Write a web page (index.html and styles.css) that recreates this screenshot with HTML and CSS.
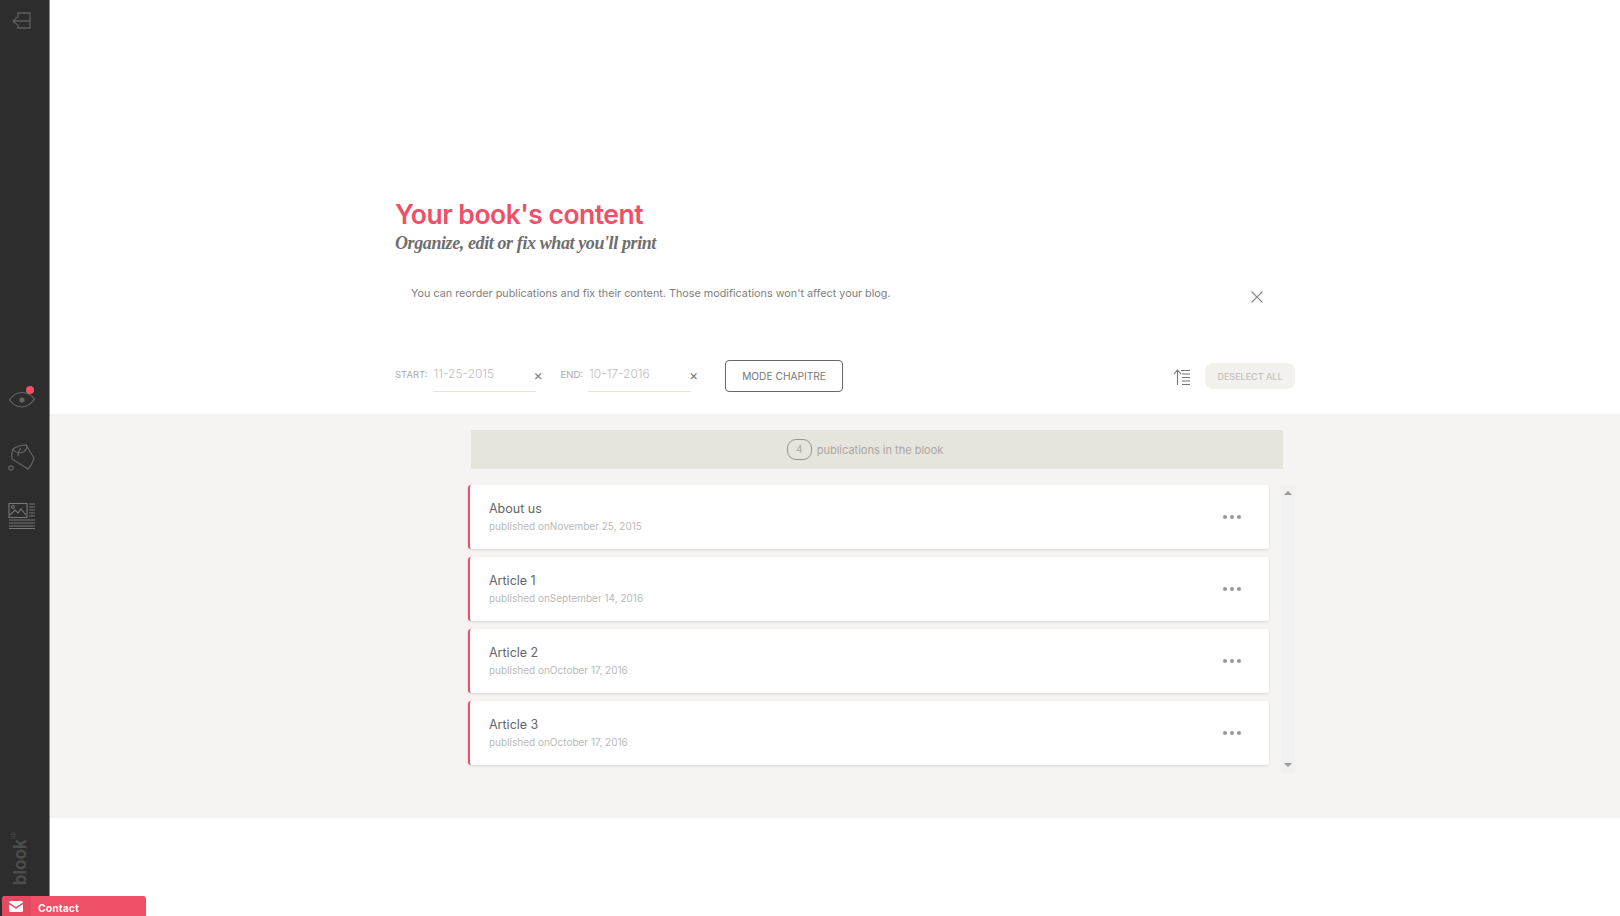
FILE: index.html
```html
<!DOCTYPE html>
<html lang="en">
<head>
    <meta charset="UTF-8">
    <title>Your book's content</title>
    <link rel="stylesheet" href="styles.css">
</head>
<body>
    <div class="app">
        <aside class="sidebar">
            <a class="side-exit">
                <svg width="24" height="20" viewBox="0 0 24 20" fill="none" stroke="#5c5c5c" stroke-width="1.4"><path d="M8 6V2h12v15H8v-3M19 10H3M7.500 6 3 10l4.500 4"/></svg>
            </a>
            <div class="side-tools">
                <a class="side-tool side-eye">
                    <svg width="28" height="24" viewBox="0 0 28 24" fill="none" stroke="#666" stroke-width="1.2"><path d="M1.500 14C5 8.500 9.500 6.500 14 6.500S23 8.500 26.500 13C23 18 18.500 21 14 21S5 18.500 1.500 14Z"/><circle cx="14" cy="14" r="2" fill="#666"/></svg>
                    <span class="eye-dot"></span>
                </a>
                <a class="side-tool">
                    <svg width="28" height="30" viewBox="0 0 28 30" fill="none" stroke="#666" stroke-width="1.2"><path d="M5 8Q10 4 18 4L26 17Q24 24 20 28L4 18Q3 13 5 8Z"/><path d="M5 8C8 12 12 13 15 11 19 9 20 6 18 4M10 15C10 10 12 8 13 7"/><circle cx="3" cy="27" r="2.200"/></svg>
                </a>
                <a class="side-tool">
                    <svg width="28" height="27" viewBox="0 0 28 27" fill="none" stroke="#777" stroke-width="1.100"><rect x="1" y="1.500" width="18" height="14"/><circle cx="5" cy="5" r="1.500"/><path d="m2 13 5-5 3 3 3-4 5 6M21 2h6M21 5h6M21 8h6M21 11h6M21 14h6M1 18h26M1 21h26M1 24h26M1 26.500h26"/></svg>
                </a>
            </div>
            <div class="side-logo">blook<sup>up</sup></div>
        </aside>

        <main class="main">
            <header class="intro">
                <h1>Your book's content</h1>
                <h2>Organize, edit or fix what you'll print</h2>
                <div class="notice">
                    <p>You can reorder publications and fix their content. Those modifications won't affect your blog.</p>
                    <svg class="notice-close" width="14" height="14" viewBox="0 0 14 14" stroke="#8a8a8a" stroke-width="1.100"><path d="m1.500 1.500 11 11M12.500 1.500l-11 11"/></svg>
                </div>
                <div class="filters">
                    <span class="filter-label">START:</span>
                    <span class="date-field">11-25-2015</span>
                    <span class="date-clear">×</span>
                    <span class="filter-label">END:</span>
                    <span class="date-field">10-17-2016</span>
                    <span class="date-clear">×</span>
                    <button class="btn-mode">MODE CHAPITRE</button>
                    <svg class="sort-icon" width="18" height="16" viewBox="0 0 18 16" fill="none" stroke="#777" stroke-width="1.100"><path d="M4.500 16V1.500M1 5l3.500-4L8 5M8 1.500h9M9 5h8M9 8.500h8M9 12h8M9 15.500h8"/></svg>
                    <button class="btn-deselect">DESELECT ALL</button>
                </div>
            </header>

            <section class="content">
                <div class="count-bar">
                    <span class="count-badge">4</span>
                    <span>publications in the blook</span>
                </div>
                <div class="list-wrap">
                    <div class="list">
                        <article class="card">
                            <div>
                                <div class="card-title">About us</div>
                                <div class="card-date">published onNovember 25, 2015</div>
                            </div>
                            <div class="dots"><i></i><i></i><i></i></div>
                        </article>
                        <article class="card">
                            <div>
                                <div class="card-title">Article 1</div>
                                <div class="card-date">published onSeptember 14, 2016</div>
                            </div>
                            <div class="dots"><i></i><i></i><i></i></div>
                        </article>
                        <article class="card">
                            <div>
                                <div class="card-title">Article 2</div>
                                <div class="card-date">published onOctober 17, 2016</div>
                            </div>
                            <div class="dots"><i></i><i></i><i></i></div>
                        </article>
                        <article class="card">
                            <div>
                                <div class="card-title">Article 3</div>
                                <div class="card-date">published onOctober 17, 2016</div>
                            </div>
                            <div class="dots"><i></i><i></i><i></i></div>
                        </article>
                    </div>
                    <div class="scrollbar">
                        <span class="arrow-up"></span>
                        <span class="arrow-down"></span>
                    </div>
                </div>
            </section>
        </main>
    </div>

    <div class="contact">
        <span class="contact-icon">
            <svg width="14" height="11" viewBox="0 0 14 11"><path fill="#fff" d="M1.500 0h11A1.500 1.500 0 0 1 14 1.500L7 6 0 1.500A1.500 1.500 0 0 1 1.500 0ZM0 3.200l7 4.500 7-4.500v6.300A1.500 1.500 0 0 1 12.500 11h-11A1.500 1.500 0 0 1 0 9.500Z"/></svg>
        </span>
        <span class="contact-label">Contact</span>
    </div>
</body>
</html>
```
FILE: styles.css
```css
* {
    box-sizing: border-box;
}
html, body {
    height: 100%;
}
body {
    margin: 0;
    font-family: Inter, "Open Sans", sans-serif;
    background: #fff;
    color: #666;
    overflow: hidden;
}
h1, h2, p {
    margin: 0;
}
.app {
    display: flex;
    height: 916px;
}

/* barre de gauche */
.sidebar {
    width: 50px;
    flex: none;
    background: #2d2d2d;
    border-right: 1px solid #8c8c8c;
    display: flex;
    flex-direction: column;
    align-items: center;
    padding-top: 11px;
    padding-right: 6px;
}
.side-exit {
    display: block;
    height: 20px;
}
.side-tools {
    margin-top: 355px;
    display: flex;
    flex-direction: column;
    align-items: center;
    gap: 31px;
}
.side-tool {
    display: block;
    position: relative;
}
.side-tool svg {
    display: block;
}
.eye-dot {
    position: absolute;
    top: 0;
    right: 2px;
    width: 8px;
    height: 8px;
    border-radius: 50%;
    background: #ef5068;
}
.side-logo {
    margin-top: auto;
    margin-bottom: 31px;
    margin-left: 4px;
    align-self: flex-start;
    writing-mode: vertical-rl;
    transform: rotate(180deg);
    font-size: 17px;
    font-weight: 700;
    color: #4c4c4c;
    line-height: 18px;
}
.side-logo sup {
    font-size: 6px;
    font-weight: 400;
}

.main {
    flex: 1;
    display: flex;
    flex-direction: column;
}
.intro {
    height: 414px;
    padding: 198px 325px 0 345px;
}
h1 {
    font-size: 26.500px;
    line-height: 33px;
    font-weight: 600;
    letter-spacing: -0.5px;
    color: #ef5068;
}
h2 {
    font-family: "Liberation Serif", serif;
    font-style: italic;
    font-weight: 700;
    font-size: 18px;
    line-height: 24px;
    color: #6e6e6e;
    letter-spacing: -0.4px;
}
.notice {
    display: flex;
    justify-content: space-between;
    padding: 30px 31px 0 16px;
    height: 105px;
}
.notice p {
    font-size: 10.800px;
    line-height: 18px;
    color: #808080;
}
.notice-close {
    margin-top: 5px;
}
.filters {
    display: flex;
    align-items: center;
    height: 32px;
    font-size: 9.500px;
}
.filter-label {
    color: #aaa;
    margin-right: 5px;
    margin-bottom: 3px;
}
.date-field {
    width: 103px;
    height: 32px;
    padding: 4px 1px 0;
    font-size: 12px;
    font-weight: 300;
    line-height: 20px;
    color: #bcbcbc;
    border-bottom: 1px solid #e8e4de;
}
.date-clear {
    width: 27px;
    margin-left: -2px;
    margin-bottom: 3px;
    color: #777;
    font-size: 14px;
}
.btn-mode {
    width: 118px;
    height: 32px;
    margin-left: 9px;
    padding: 0;
    font: 400 10.200px Inter, sans-serif;
    color: #777;
    background: #fff;
    border: 1px solid #666;
    border-radius: 4px;
}
.sort-icon {
    margin-left: auto;
    margin-top: 2px;
}
.btn-deselect {
    width: 90px;
    height: 26px;
    margin-left: 14px;
    padding: 0;
    font: 500 9px Inter, sans-serif;
    color: #c4c2bd;
    background: #f2f1ed;
    border: none;
    border-radius: 8px;
}

/* liste des publications */
.content {
    height: 404px;
    background: #f5f4f2;
    padding: 16px 0 0 418px;
}
.count-bar {
    width: 812px;
    height: 39px;
    background: #e7e3dd;
    display: flex;
    align-items: center;
    justify-content: center;
    gap: 5px;
    padding-right: 24px;
    font-size: 11px;
    color: #aaa7a1;
    margin-left: 3px;
}
.count-badge {
    width: 25px;
    height: 21px;
    border: 1px solid #98958f;
    border-radius: 9px;
    text-align: center;
    line-height: 19px;
    font-size: 10px;
}
.list-wrap {
    display: flex;
    gap: 12px;
    margin-top: 16px;
}
.list {
    display: flex;
    flex-direction: column;
    gap: 8px;
}
.card {
    width: 801px;
    height: 64px;
    padding: 0 28px 0 19px;
    background: #fff;
    border-left: 2px solid #ef5068;
    border-radius: 3px;
    box-shadow: 0 1px 3px rgba(0,0,0,0.12);
    display: flex;
    align-items: center;
    justify-content: space-between;
}
.card-title {
    font-size: 12.500px;
    line-height: 18px;
    font-weight: 400;
    color: #666;
}
.card-date {
    font-size: 10px;
    line-height: 17px;
    color: #b9b9b9;
}
.dots {
    display: flex;
    gap: 3px;
}
.dots i {
    width: 4px;
    height: 4px;
    border-radius: 50%;
    background: #999;
}
.scrollbar {
    width: 14px;
    height: 288px;
    background: #f0f0f0;
    display: flex;
    flex-direction: column;
    align-items: center;
    justify-content: space-between;
    padding: 6px 0;
}
.arrow-up, .arrow-down {
    width: 0;
    height: 0;
    border-left: 4px solid transparent;
    border-right: 4px solid transparent;
}
.arrow-up {
    border-bottom: 4px solid #999;
}
.arrow-down {
    border-top: 4px solid #999;
}

/* bouton contact */
.contact {
    position: fixed;
    left: 2px;
    bottom: 0;
    width: 144px;
    height: 20px;
    display: flex;
    background: #ef5068;
    border-radius: 3px 3px 0 0;
    color: #fff;
    overflow: hidden;
}
.contact-icon {
    width: 29px;
    padding-right: 2px;
    background: #e54a61;
    display: flex;
    align-items: center;
    justify-content: center;
}
.contact-label {
    padding-left: 7px;
    font-size: 10.500px;
    font-weight: 700;
    line-height: 25px;
}
```
